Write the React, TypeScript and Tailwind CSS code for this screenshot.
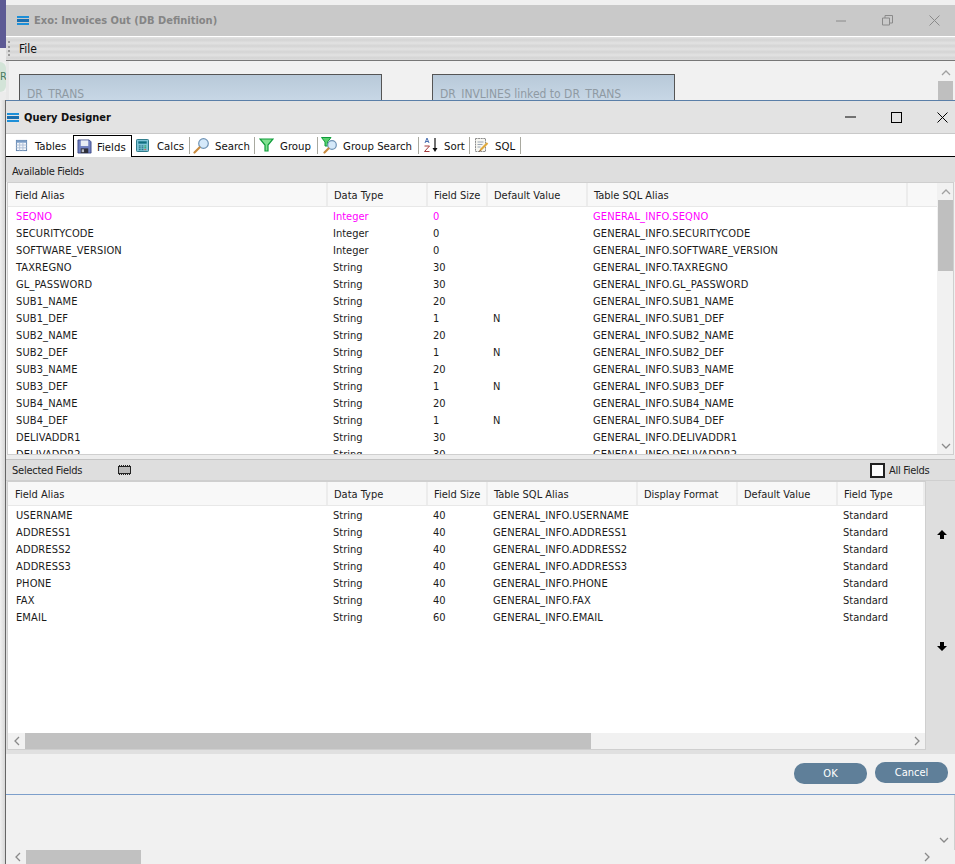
import React from "react";

const font = "font-['DejaVu_Sans_Condensed','DejaVu_Sans',sans-serif]";

const avail: string[][] = [
  ["SECURITYCODE", "Integer", "0", ""],
  ["SOFTWARE_VERSION", "Integer", "0", ""],
  ["TAXREGNO", "String", "30", ""],
  ["GL_PASSWORD", "String", "30", ""],
  ["SUB1_NAME", "String", "20", ""],
  ["SUB1_DEF", "String", "1", "N"],
  ["SUB2_NAME", "String", "20", ""],
  ["SUB2_DEF", "String", "1", "N"],
  ["SUB3_NAME", "String", "20", ""],
  ["SUB3_DEF", "String", "1", "N"],
  ["SUB4_NAME", "String", "20", ""],
  ["SUB4_DEF", "String", "1", "N"],
  ["DELIVADDR1", "String", "30", ""],
  ["DELIVADDR2", "String", "30", ""],
];

const selected: string[][] = [
  ["USERNAME", "40"],
  ["ADDRESS1", "40"],
  ["ADDRESS2", "40"],
  ["ADDRESS3", "40"],
  ["PHONE", "40"],
  ["FAX", "40"],
  ["EMAIL", "60"],
];

const AppIcon = () => (
  <svg width="12" height="9" viewBox="0 0 12 9" className="shrink-0">
    <rect x="0" y="0" width="12" height="2" fill="#1d8fd8" />
    <rect x="0" y="3" width="12" height="3" fill="#1a6fb0" />
    <rect x="0" y="7" width="12" height="2" fill="#1d8fd8" />
  </svg>
);

const Chevron = ({ dir, c = "#8a8a8a" }: { dir: "up" | "down" | "left" | "right"; c?: string }) => {
  const d = {
    up: "M1 7 L5 3 L9 7",
    down: "M1 3 L5 7 L9 3",
    left: "M7 1 L3 5 L7 9",
    right: "M3 1 L7 5 L3 9",
  }[dir];
  return (
    <svg width="10" height="10" viewBox="0 0 10 10" className="shrink-0">
      <path d={d} fill="none" stroke={c} strokeWidth="1.3" />
    </svg>
  );
};

const TablesIcon = () => (
  <svg width="13" height="13" viewBox="0 0 14 14">
    <rect x="1.5" y="1.5" width="11" height="11" fill="#f4f7fb" stroke="#5b7faa" />
    <rect x="1.5" y="1.5" width="11" height="2.5" fill="#7a9cc6" />
    <path d="M1.5 6.5H12.5M1.5 9.5H12.5M5 4V12.5M8.5 4V12.5" stroke="#aebfd6" />
  </svg>
);
const DiskIcon = () => (
  <svg width="15" height="15" viewBox="0 0 16 16">
    <path d="M1 1H13L15 3V15H1Z" fill="#6f7fc0" stroke="#2b3a78" strokeWidth="0.8" />
    <rect x="4" y="1.5" width="8" height="6" fill="#e8edf5" />
    <rect x="4" y="10" width="8" height="5" fill="#2f2f3a" />
    <rect x="5" y="11" width="2.5" height="3" fill="#b9bcc8" />
  </svg>
);
const CalcIcon = () => (
  <svg width="13" height="13" viewBox="0 0 14 14">
    <rect x="0.5" y="0.5" width="13" height="13" rx="1" fill="#7ec4d6" stroke="#1d6f80" />
    <rect x="2.5" y="2.5" width="9" height="2.5" fill="#0f6f80" />
    <path d="M3 7.5h2M6 7.5h2M3 9.5h2M6 9.5h2M3 11.5h2M6 11.5h2" stroke="#0f5f70" />
    <path d="M9 7.5h2M9 9.5h2" stroke="#1f9a40" />
    <path d="M9 11.5h2" stroke="#e0443a" />
  </svg>
);
const SearchIcon = () => (
  <svg width="17" height="17" viewBox="0 0 17 17">
    <circle cx="10.5" cy="6.5" r="4.8" fill="#d5e9fa" stroke="#6f93b5" strokeWidth="1.2" />
    <path d="M6.5 10.5L1.5 15.5" stroke="#c98a3d" strokeWidth="2.2" strokeLinecap="round" />
  </svg>
);
const FunnelIcon = () => (
  <svg width="15" height="14" viewBox="0 0 15 14">
    <path d="M1 1H14L9 7V13H6V7Z" fill="#7fe08f" stroke="#0f9c3a" strokeWidth="1.2" />
  </svg>
);
const GroupSearchIcon = () => (
  <svg width="17" height="17" viewBox="0 0 17 17">
    <path d="M0.5 0.5H10L6.5 5V9H4V5Z" fill="#57cf6d" stroke="#0f9c3a" />
    <circle cx="11" cy="8" r="4.3" fill="#d5e9fa" stroke="#6f93b5" strokeWidth="1.2" />
    <path d="M7.5 11.5L3.5 15.5" stroke="#c98a3d" strokeWidth="2.2" strokeLinecap="round" />
  </svg>
);
const SortIcon = () => (
  <svg width="17" height="16" viewBox="0 0 17 16">
    <path d="M3 6L5 1L7 6M3.8 4.5H6.2" fill="none" stroke="#4a6fb0" />
    <path d="M2.5 9H7.5L2.5 14.5H7.5" fill="none" stroke="#a33a3a" />
    <path d="M13 1V13" stroke="#111" strokeWidth="1.2" />
    <path d="M10.5 11L13 15L15.5 11Z" fill="#111" />
  </svg>
);
const SqlIcon = () => (
  <svg width="15" height="16" viewBox="0 0 15 16">
    <rect x="1.5" y="1.5" width="10" height="13" fill="#f7f7f2" stroke="#8d8d8d" strokeDasharray="2 0.6" />
    <path d="M3.5 5h6M3.5 7.5h5M3.5 10h3" stroke="#9aa5b5" />
    <path d="M6.5 13L13.5 6" stroke="#e0a83a" strokeWidth="2.2" />
    <path d="M5.5 14.5L6.5 13" stroke="#7a4a20" strokeWidth="1.2" />
  </svg>
);
const ChipIcon = () => (
  <svg width="13" height="10" viewBox="0 0 13 10">
    <rect x="0.5" y="1.5" width="12" height="7" fill="#b8b8b8" stroke="#222" />
    <path d="M1.5 0V1.5M3.5 0V1.5M5.5 0V1.5M7.5 0V1.5M9.5 0V1.5M11.5 0V1.5M1.5 8.5V10M3.5 8.5V10M5.5 8.5V10M7.5 8.5V10M9.5 8.5V10M11.5 8.5V10" stroke="#222" />
  </svg>
);
const BlockArrow = ({ down }: { down?: boolean }) => (
  <svg width="10" height="9" viewBox="0 0 10 9">
    <path d={down ? "M3 0H7V4H10L5 9L0 4H3Z" : "M3 9H7V5H10L5 0L0 5H3Z"} fill="#000" />
  </svg>
);

const Tab = ({ icon, label, w, active, sep = true, gap = "gap-[5px]", iw = "w-[17px]" }: { icon: React.ReactNode; label: string; w: string; active?: boolean; sep?: boolean; gap?: string; iw?: string }) => (
  <div className={`relative flex shrink-0 items-center ${gap} ${w} ${active ? "z-10 h-[22px] self-end -mb-px border-x border-t border-black bg-white pl-[3px]" : "h-full pl-[3px]"}`}>
    <span className={`flex ${iw} shrink-0 justify-center`}>{icon}</span>
    <span className="whitespace-nowrap pt-[4px] text-[11.3px] text-[#111]">{label}</span>
    {sep && !active && <span className="absolute right-0 top-[3px] h-[17px] w-px bg-[#a9a9a0]" />}
  </div>
);

const Header = ({ cols }: { cols: [string, string][] }) => (
  <div className="flex h-[24px] shrink-0 border-b border-[#e8e8e8] bg-[#f8f8f8]">
    {cols.map(([t, w], i) => (
      <div key={t + w} className={`${w} flex shrink-0 items-center border-r-2 border-[#ececec] pt-[3px] ${i === 0 ? "pl-[7px]" : "pl-[6px]"} whitespace-nowrap text-[11px] text-[#222]`}>
        {t}
      </div>
    ))}
  </div>
);

const Cell = ({ w, children, first, caps }: { w: string; children?: React.ReactNode; first?: boolean; caps?: boolean }) => (
  <div className={`${w} shrink-0 whitespace-nowrap ${first ? "pl-[8px]" : "pl-[5px]"} ${caps ? "tracking-[0.12px]" : ""}`}>{children}</div>
);

export default function App() {
  return (
    <div className={`${font} flex h-[864px] w-[955px] overflow-hidden bg-[#f0f0f0]`}>
      {/* backdrop sliver */}
      <div className="flex w-[6px] shrink-0 flex-col overflow-hidden">
        <div className="h-[48px] shrink-0 bg-[#5d5a94]" />
        <div className="h-[14px] shrink-0 bg-[#ececec]" />
        <div className="flex h-[30px] shrink-0 items-center overflow-hidden rounded-r-[15px] bg-[#d3e4d8] text-[11px] text-[#4a7a60]">
          <span>R</span>
        </div>
        <div className="h-[8px] shrink-0 bg-[#ececec]" />
        <div className="flex-1 border-r border-[#666] bg-gradient-to-r from-[#f0f0f0] to-[#d8d8d8]" />
      </div>
      <div className="flex w-[949px] flex-col">
        {/* underlying window: top */}
        <div className="h-[5px] shrink-0 bg-[#f0f0f0]" />
        <div className="flex h-[31px] shrink-0 items-center bg-[#c9c9c9] pl-[11px]">
          <AppIcon />
          <span className="ml-[5px] whitespace-nowrap pt-[2px] text-[11px] font-bold text-[#858585]">Exo: Invoices Out (DB Definition)</span>
          <div className="ml-auto flex items-center">
            <svg width="10" height="2" viewBox="0 0 10 2" className="mr-[36px]"><path d="M0 1H10" stroke="#8a8a8a" /></svg>
            <svg width="11" height="11" viewBox="0 0 11 11" className="mr-[36px]"><path d="M0.5 3H7.5V10H0.5ZM3 3V0.5H10.5V8H7.5" fill="none" stroke="#8a8a8a" /></svg>
            <svg width="11" height="11" viewBox="0 0 11 11" className="mr-[15px]"><path d="M0.5 0.5L10.5 10.5M10.5 0.5L0.5 10.5" stroke="#8a8a8a" /></svg>
          </div>
        </div>
        <div className="flex h-[25px] shrink-0 items-center border-y border-t-white border-b-[#777] bg-[repeating-linear-gradient(180deg,#e2e2e2_0px,#d4d4d4_3px,#e2e2e2_6px)] pl-[2px]">
          <div className="mr-[9px] h-[15px] border-l-2 border-dotted border-[#999]" />
          <span className="text-[12px] text-[#111]">File</span>
        </div>
        <div className="flex h-[39px] shrink-0 overflow-hidden border-l-[3px] border-[#e8e8e8] bg-[#f1f1f1] pl-[10px] pt-[13px]">
          <div className="h-[40px] w-[363px] shrink-0 border border-[#555] bg-gradient-to-b from-[#b8c9d9] to-[#cfdeec] pl-[7px] pt-[10px] text-[12px] leading-[18px] text-[#8f9aa3]">DR_TRANS</div>
          <div className="ml-[50px] h-[40px] w-[243px] shrink-0 border border-[#555] bg-gradient-to-b from-[#b8c9d9] to-[#cfdeec] pl-[7px] pt-[10px] text-[12px] leading-[18px] text-[#8f9aa3]">DR_INVLINES linked to DR_TRANS</div>
          <div className="ml-auto mr-px -mt-[13px] flex w-[17px] shrink-0 flex-col items-center pt-[7px]">
            <Chevron dir="up" c="#a0a0a0" />
            <div className="mt-[3px] h-[30px] w-[15px] bg-[#bfbfbf]" />
          </div>
        </div>

        {/* Query Designer */}
        <div className="flex h-[694px] shrink-0 flex-col border-t border-[#5a7fa8] bg-[#f1f1f1]">
          <div className="flex h-[32px] shrink-0 items-center bg-[#e3e3e3] pl-[1px]">
            <AppIcon />
            <span className="ml-[5px] whitespace-nowrap pt-[2px] text-[11px] font-bold text-[#111]">Query Designer</span>
            <div className="ml-auto flex items-center">
              <svg width="11" height="2" viewBox="0 0 11 2" className="mr-[35px]"><path d="M0 1H11" stroke="#000" /></svg>
              <svg width="11" height="11" viewBox="0 0 11 11" className="mr-[35px]"><rect x="0.5" y="0.5" width="10" height="10" fill="none" stroke="#000" /></svg>
              <svg width="11" height="11" viewBox="0 0 11 11" className="mr-[7px]"><path d="M0.5 0.5L10.5 10.5M10.5 0.5L0.5 10.5" stroke="#000" /></svg>
            </div>
          </div>
          <div className="flex h-[24px] shrink-0 items-center border-y border-t-[#c9c9c9] border-b-black bg-white pl-[5px]">
            <Tab icon={<TablesIcon />} label="Tables" w="w-[62px]" sep={false} iw="w-[14px]" gap="gap-[7px]" />
            <Tab icon={<DiskIcon />} label="Fields" w="w-[59px]" active iw="w-[15px]" gap="gap-[5px]" />
            <Tab icon={<CalcIcon />} label="Calcs" w="w-[58px]" iw="w-[14px]" gap="gap-[8px]" />
            <Tab icon={<SearchIcon />} label="Search" w="w-[65px]" />
            <Tab icon={<FunnelIcon />} label="Group" w="w-[63px]" iw="w-[17px]" />
            <Tab icon={<GroupSearchIcon />} label="Group Search" w="w-[101px]" />
            <Tab icon={<SortIcon />} label="Sort" w="w-[51px]" />
            <Tab icon={<SqlIcon />} label="SQL" w="w-[51px]" gap="gap-[5px]" />
          </div>
          <div className="flex h-[25px] shrink-0 items-center bg-[#dedede] pl-[6px] pt-[5px] text-[11px] tracking-[-0.25px] text-[#222]">Available Fields</div>

          {/* Available table */}
          <div className="mx-[1px] flex h-[273px] shrink-0 overflow-hidden border border-[#cfcfcf] bg-white">
            <div className="flex w-[929px] shrink-0 flex-col overflow-hidden">
              <Header cols={[["Field Alias", "w-[320px]"], ["Data Type", "w-[100px]"], ["Field Size", "w-[60px]"], ["Default Value", "w-[100px]"], ["Table SQL Alias", "w-[320px]"]]} />
              <div className="pt-px text-[11px] leading-[17px] text-[#1b1b1b]">
                <div className="flex text-[#ff00ff]">
                  <Cell w="w-[320px]" first caps>SEQNO</Cell>
                  <Cell w="w-[100px]">Integer</Cell>
                  <Cell w="w-[60px]">0</Cell>
                  <Cell w="w-[100px]" />
                  <Cell w="w-[320px]" caps>GENERAL_INFO.SEQNO</Cell>
                </div>
                {avail.map((r) => (
                  <div key={r[0]} className="flex">
                    <Cell w="w-[320px]" first caps>{r[0]}</Cell>
                    <Cell w="w-[100px]">{r[1]}</Cell>
                    <Cell w="w-[60px]">{r[2]}</Cell>
                    <Cell w="w-[100px]">{r[3]}</Cell>
                    <Cell w="w-[320px]" caps>GENERAL_INFO.{r[0]}</Cell>
                  </div>
                ))}
              </div>
            </div>
            <div className="flex w-[17px] shrink-0 flex-col items-center bg-[#f1f1f1]">
              <div className="flex h-[17px] items-center"><Chevron dir="up" c="#a0a0a0" /></div>
              <div className="h-[71px] w-[15px] bg-[#bfbfbf]" />
              <div className="flex-1" />
              <div className="flex h-[17px] items-center"><Chevron dir="down" c="#8a8a8a" /></div>
            </div>
          </div>

          <div className="h-[4px] shrink-0 bg-[#ececec]" />
          <div className="flex h-[21px] shrink-0 items-center border-t border-[#c4c4c4] bg-[#dedede] pl-[6px] text-[11px] text-[#222]">
            <span className="w-[106px] shrink-0 pt-[2px] tracking-[-0.25px]">Selected Fields</span>
            <span className="flex"><ChipIcon /></span>
            <span className="ml-auto mr-[26px] flex items-center gap-[4px]">
              <span className="h-[15px] w-[15px] border-2 border-[#222] bg-white" />
              <span className="w-[40px] whitespace-nowrap pt-[2px] tracking-[-0.3px]">All Fields</span>
            </span>
          </div>

          {/* Selected table + arrows */}
          <div className="flex h-[270px] shrink-0 border-t border-[#cfcfcf] bg-[#dedede]">
            <div className="ml-[1px] flex w-[919px] shrink-0 flex-col border border-[#cfcfcf] bg-white">
              <Header cols={[["Field Alias", "w-[320px]"], ["Data Type", "w-[100px]"], ["Field Size", "w-[60px]"], ["Table SQL Alias", "w-[150px]"], ["Display Format", "w-[100px]"], ["Default Value", "w-[100px]"], ["Field Type", "w-[87px]"]]} />
              <div className="flex-1 pt-px text-[11px] leading-[17px] text-[#1b1b1b]">
                {selected.map((r) => (
                  <div key={r[0]} className="flex">
                    <Cell w="w-[320px]" first caps>{r[0]}</Cell>
                    <Cell w="w-[100px]">String</Cell>
                    <Cell w="w-[60px]">{r[1]}</Cell>
                    <Cell w="w-[150px]" caps>GENERAL_INFO.{r[0]}</Cell>
                    <Cell w="w-[100px]" />
                    <Cell w="w-[100px]" />
                    <Cell w="w-[87px]">Standard</Cell>
                  </div>
                ))}
              </div>
              <div className="flex h-[16px] shrink-0 items-center bg-[#f1f1f1] pl-[4px]">
                <Chevron dir="left" />
                <div className="ml-[3px] h-[16px] w-[566px] bg-[#c1c1c1]" />
                <div className="flex-1" />
                <Chevron dir="right" />
                <div className="w-[3px]" />
              </div>
            </div>
            <div className="flex flex-1 flex-col items-center pl-[3px] pt-[49px]">
              <BlockArrow />
              <div className="h-[103px]" />
              <BlockArrow down />
            </div>
          </div>
          <div className="h-[4px] shrink-0 bg-[#e0e0e0]" />
          {/* Buttons */}
          <div className="flex h-[40px] shrink-0 items-start justify-end pr-[7px] pt-[8px]">
            <button className="mr-[8px] mt-[1px] h-[21px] w-[73px] rounded-[10px] bg-[#5f7f99] pt-[2px] text-[11px] text-white">OK</button>
            <button className="h-[21px] w-[73px] rounded-[10px] bg-[#5f7f99] pt-[2px] text-[11px] text-white">Cancel</button>
          </div>
        </div>

        {/* underlying window: bottom */}
        <div className="flex flex-1 flex-col border-t border-[#7d9fcb] bg-[#f1f1f1]">
          <div className="flex flex-1 justify-end">
            <div className="flex w-[16px] flex-col items-center justify-end pb-[5px]">
              <Chevron dir="down" />
            </div>
            <div className="w-[3px] border-r border-[#d0d0d0] bg-[#f1f1f1]" />
          </div>
          <div className="flex h-[14px] shrink-0 items-center bg-[#f0f0f0] pl-[7px]">
            <Chevron dir="left" />
            <div className="ml-[3px] h-[14px] w-[115px] bg-[#c1c1c1]" />
            <div className="flex-1" />
            <div className="mr-[23px]"><Chevron dir="right" /></div>
          </div>
        </div>
      </div>
    </div>
  );
}
